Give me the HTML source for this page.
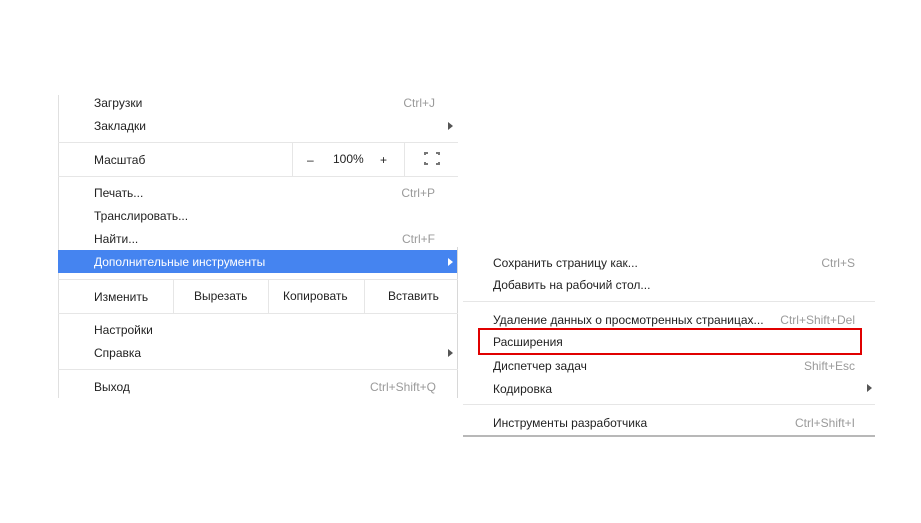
<!DOCTYPE html>
<html><head><meta charset="utf-8"><style>
body{margin:0;width:921px;height:523px;background:#fff;position:relative;overflow:hidden;font-family:"Segoe UI","Liberation Sans","DejaVu Sans",sans-serif;font-size:12px;color:#222}
.a{position:absolute;white-space:nowrap;line-height:16px}
.s{color:#9a9a9a;text-align:right}
.h{position:absolute;height:1px;background:#e6e6e6}
.v{position:absolute;width:1px;background:#e6e6e6}
.tri{position:absolute;width:0;height:0;border-top:4px solid transparent;border-bottom:4px solid transparent;border-left:5px solid #555}
</style></head><body>
<div class="v" style="left:58px;top:95px;height:303px;background:#e0e0e0"></div>
<div class="v" style="left:457px;top:247px;height:151px;background:#d8d8d8"></div>
<div class="a" style="left:94px;top:95px">Загрузки</div><div class="a s" style="right:486px;top:95px">Ctrl+J</div>
<div class="a" style="left:94px;top:118px">Закладки</div><div class="tri" style="left:448px;top:122px"></div>
<div class="h" style="left:58px;top:142px;width:400px"></div>
<div class="a" style="left:94px;top:152px">Масштаб</div>
<div class="v" style="left:292px;top:142px;height:34px"></div>
<div class="v" style="left:404px;top:142px;height:34px"></div>
<div class="a" style="left:307px;top:152px">–</div>
<div class="a" style="left:333px;top:151px">100%</div>
<div class="a" style="left:380px;top:152px">+</div>
<div style="position:absolute;left:424px;top:152px;width:16px;height:13px;border:2px solid #777;box-sizing:border-box;clip-path:polygon(0 0,35% 0,35% 100%,0 100%,0 0,100% 0,100% 100%,65% 100%,65% 0)"></div>
<div style="position:absolute;left:428px;top:150px;width:8px;height:17px;background:#fff"></div>
<div style="position:absolute;left:422px;top:155px;width:20px;height:7px;background:#fff"></div>
<div class="h" style="left:58px;top:176px;width:400px"></div>
<div class="a" style="left:94px;top:185px">Печать...</div><div class="a s" style="right:486px;top:185px">Ctrl+P</div>
<div class="a" style="left:94px;top:208px">Транслировать...</div>
<div class="a" style="left:94px;top:231px">Найти...</div><div class="a s" style="right:486px;top:231px">Ctrl+F</div>
<div style="position:absolute;left:58px;top:250px;width:399px;height:23px;background:#4584f0"></div>
<div class="a" style="left:94px;top:254px;color:#fff">Дополнительные инструменты</div>
<div class="tri" style="left:448px;top:258px;border-left-color:#fff"></div>
<div class="h" style="left:58px;top:279px;width:400px"></div>
<div class="a" style="left:94px;top:289px">Изменить</div>
<div class="v" style="left:173px;top:279px;height:34px"></div>
<div class="a" style="left:194px;top:288px">Вырезать</div>
<div class="v" style="left:268px;top:279px;height:34px"></div>
<div class="a" style="left:283px;top:288px">Копировать</div>
<div class="v" style="left:364px;top:279px;height:34px"></div>
<div class="a" style="left:388px;top:288px">Вставить</div>
<div class="h" style="left:58px;top:313px;width:400px"></div>
<div class="a" style="left:94px;top:322px">Настройки</div>
<div class="a" style="left:94px;top:345px">Справка</div><div class="tri" style="left:448px;top:349px"></div>
<div class="h" style="left:58px;top:369px;width:400px"></div>
<div class="a" style="left:94px;top:379px">Выход</div><div class="a s" style="right:485px;top:379px">Ctrl+Shift+Q</div>

<div class="a" style="left:493px;top:255px">Сохранить страницу как...</div><div class="a s" style="right:66px;top:255px">Ctrl+S</div>
<div class="a" style="left:493px;top:277px">Добавить на рабочий стол...</div>
<div class="h" style="left:463px;top:301px;width:412px"></div>
<div class="a" style="left:493px;top:312px">Удаление данных о просмотренных страницах...</div><div class="a s" style="right:66px;top:312px">Ctrl+Shift+Del</div>
<div class="a" style="left:493px;top:334px">Расширения</div>
<div style="position:absolute;left:478px;top:328px;width:384px;height:27px;border:2px solid #e00000;box-sizing:border-box"></div>
<div class="a" style="left:493px;top:358px">Диспетчер задач</div><div class="a s" style="right:66px;top:358px">Shift+Esc</div>
<div class="a" style="left:493px;top:381px">Кодировка</div><div class="tri" style="left:867px;top:384px"></div>
<div class="h" style="left:463px;top:404px;width:412px"></div>
<div class="a" style="left:493px;top:415px">Инструменты разработчика</div><div class="a s" style="right:66px;top:415px">Ctrl+Shift+I</div>
<div class="h" style="left:463px;top:435px;width:412px;height:2px;background:#b8b8b8"></div>
</body></html>
